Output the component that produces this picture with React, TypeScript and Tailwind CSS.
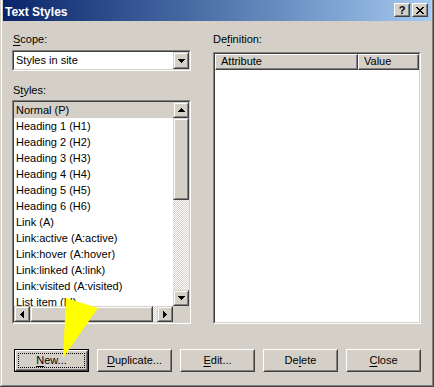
import React from "react";

type Dir = "up" | "down" | "left" | "right";

function Tri({ dir }: { dir: Dir }) {
  const rows = [
    [3, 1],
    [2, 3],
    [1, 5],
    [0, 7],
  ];
  if (dir === "up" || dir === "down") {
    const r = dir === "up" ? rows : [...rows].reverse();
    return (
      <svg width="7" height="4" viewBox="0 0 7 4" shapeRendering="crispEdges">
        {r.map(([x, w], i) => (
          <rect key={i} x={x} y={i} width={w} height={1} fill="#000" />
        ))}
      </svg>
    );
  }
  const r = dir === "left" ? rows : [...rows].reverse();
  return (
    <svg width="4" height="7" viewBox="0 0 4 7" shapeRendering="crispEdges">
      {r.map(([y, h], i) => (
        <rect key={i} x={i} y={y} width={1} height={h} fill="#000" />
      ))}
    </svg>
  );
}

function ScrollBtn({ dir, className = "" }: { dir?: Dir; className?: string }) {
  return (
    <div
      className={
        "border border-t-[#d4d0c8] border-l-[#d4d0c8] border-r-[#404040] border-b-[#404040] bg-[#d4d0c8] " +
        className
      }
    >
      <div className="w-full h-full border border-t-white border-l-white border-r-[#808080] border-b-[#808080] flex items-center justify-center">
        {dir ? <Tri dir={dir} /> : null}
      </div>
    </div>
  );
}

function Sunken({ className = "", children }: { className?: string; children?: React.ReactNode }) {
  return (
    <div className={"border border-t-[#808080] border-l-[#808080] border-r-white border-b-white " + className}>
      <div className="w-full h-full border border-t-[#404040] border-l-[#404040] border-r-[#d4d0c8] border-b-[#d4d0c8] bg-white overflow-hidden">
        {children}
      </div>
    </div>
  );
}

function PushButton({ children, isDefault = false }: { children: React.ReactNode; isDefault?: boolean }) {
  const inner = (
    <div className="w-full h-full border border-t-white border-l-white border-r-[#404040] border-b-[#404040]">
      <div className="w-full h-full border border-t-[#d4d0c8] border-l-[#d4d0c8] border-r-[#808080] border-b-[#808080] flex items-center justify-center">
        {isDefault ? (
          <div className="w-[67px] h-[15px] border border-dotted border-black flex items-center justify-center leading-[13px]">
            {children}
          </div>
        ) : (
          <span className="leading-[13px]">{children}</span>
        )}
      </div>
    </div>
  );
  if (isDefault) {
    return <div className="w-[75px] h-[23px] border border-black bg-[#d4d0c8]">{inner}</div>;
  }
  return <div className="w-[75px] h-[23px] bg-[#d4d0c8]">{inner}</div>;
}

const items = [
  "Normal (P)",
  "Heading 1 (H1)",
  "Heading 2 (H2)",
  "Heading 3 (H3)",
  "Heading 4 (H4)",
  "Heading 5 (H5)",
  "Heading 6 (H6)",
  "Link (A)",
  "Link:active (A:active)",
  "Link:hover (A:hover)",
  "Link:linked (A:link)",
  "Link:visited (A:visited)",
  "List item (LI)",
];

const checker =
  "bg-[image:repeating-conic-gradient(#ffffff_0_25%,#d4d0c8_0_50%)] bg-[length:2px_2px]";

export default function App() {
  return (
    <div className="relative w-[434px] h-[387px] overflow-hidden bg-[#d4d0c8] font-['Liberation_Sans',Arial,sans-serif] text-[11px] text-black">
      <div className="w-full h-full pl-[1px] border-r border-b border-r-[#404040] border-b-[#404040]">
        <div className="w-full h-full pl-[1px] pr-[1px] pb-[1px] border-l border-r border-b border-l-white border-r-[#808080] border-b-[#808080] flex flex-col">
          {/* Title bar */}
          <div className="h-[21px] flex items-start bg-linear-to-r from-[#0a246a] to-[#a6caf0] pr-[3px]">
            <div className="ml-[2px] mt-[5px] leading-[14px] text-[12px] font-bold text-white whitespace-nowrap">
              Text Styles
            </div>
            <div className="ml-auto mt-[3px] flex gap-[2px]">
              <div className="w-[16px] h-[14px] bg-[#d4d0c8] border border-t-white border-l-white border-r-[#404040] border-b-[#404040]">
                <div className="w-full h-full border border-t-[#d4d0c8] border-l-[#d4d0c8] border-r-[#808080] border-b-[#808080] flex items-center justify-center text-[11px] font-bold leading-[10px]">
                  ?
                </div>
              </div>
              <div className="w-[16px] h-[14px] bg-[#d4d0c8] border border-t-white border-l-white border-r-[#404040] border-b-[#404040]">
                <div className="w-full h-full border border-t-[#d4d0c8] border-l-[#d4d0c8] border-r-[#808080] border-b-[#808080] flex items-center justify-center">
                  <svg width="8" height="7" viewBox="0 0 8 7" shapeRendering="crispEdges">
                    {[0, 1, 2, 3, 4, 5, 6].map((i) => (
                      <React.Fragment key={i}>
                        <rect x={i} y={i} width={2} height={1} fill="#000" />
                        <rect x={6 - i} y={i} width={2} height={1} fill="#000" />
                      </React.Fragment>
                    ))}
                  </svg>
                </div>
              </div>
            </div>
          </div>

          {/* Body */}
          <div className="flex pl-[9px] pr-[10px] gap-[22px]">
            {/* Left column */}
            <div className="w-[179px] flex flex-col">
              <div className="mt-[12px] h-[13px] leading-[13px] pl-[1px]">
                <span className="underline underline-offset-2">S</span>cope:
              </div>
              <Sunken className="mt-[4px] h-[21px] w-[179px]">
                <div className="flex h-full">
                  <div className="flex-1 pl-[2px] leading-[17px]">Styles in site</div>
                  <ScrollBtn dir="down" className="w-[16px] h-[17px]" />
                </div>
              </Sunken>
              <div className="mt-[13px] h-[13px] leading-[13px] pl-[1px]">
                S<span className="underline underline-offset-2">t</span>yles:
              </div>
              <Sunken className="mt-[3px] h-[224px] w-[179px]">
                <div className="flex flex-col h-full">
                  <div className="flex h-[204px]">
                    <div className="w-[159px] h-[204px] overflow-hidden">
                      {items.map((t, i) => (
                        <div
                          key={t}
                          className={
                            "h-[16px] leading-[16px] pl-[2px] whitespace-nowrap " +
                            (i === 0 ? "bg-[#d4d0c8]" : "")
                          }
                        >
                          {t}
                        </div>
                      ))}
                    </div>
                    <div className="w-[16px] flex flex-col">
                      <ScrollBtn dir="up" className="w-[16px] h-[16px]" />
                      <ScrollBtn className="w-[16px] h-[82px]" />
                      <div className={"w-[16px] h-[90px] " + checker} />
                      <ScrollBtn dir="down" className="w-[16px] h-[16px]" />
                    </div>
                  </div>
                  <div className="flex h-[16px]">
                    <ScrollBtn dir="left" className="w-[16px] h-[16px]" />
                    <ScrollBtn className="w-[123px] h-[16px]" />
                    <div className={"w-[4px] h-[16px] " + checker} />
                    <ScrollBtn dir="right" className="w-[16px] h-[16px]" />
                    <div className="w-[16px] h-[16px] bg-[#d4d0c8]" />
                  </div>
                </div>
              </Sunken>
            </div>

            {/* Right column */}
            <div className="w-[208px] flex flex-col">
              <div className="mt-[12px] h-[13px] leading-[13px]">
                De<span className="underline underline-offset-2">f</span>inition:
              </div>
              <Sunken className="mt-[6px] h-[272px] w-[208px]">
                <div className="flex h-[16px]">
                  <div className="w-[143px] h-full bg-[#d4d0c8] border border-t-white border-l-white border-r-[#404040] border-b-[#404040]">
                    <div className="w-full h-full border-r border-b border-r-[#808080] border-b-[#808080] pl-[5px] leading-[13px]">
                      Attribute
                    </div>
                  </div>
                  <div className="w-[61px] h-full bg-[#d4d0c8] border border-t-white border-l-white border-r-[#404040] border-b-[#404040]">
                    <div className="w-full h-full border-r border-b border-r-[#808080] border-b-[#808080] pl-[5px] leading-[13px]">
                      Value
                    </div>
                  </div>
                </div>
              </Sunken>
            </div>
          </div>

          {/* Buttons */}
          <div className="flex pl-[11px] mt-[25px] gap-[8px]">
            <PushButton isDefault>
              <span>
                <span className="underline underline-offset-2">N</span>ew...
              </span>
            </PushButton>
            <PushButton>
              <span>
                <span className="underline underline-offset-2">D</span>uplicate...
              </span>
            </PushButton>
            <PushButton>
              <span>
                <span className="underline underline-offset-2">E</span>dit...
              </span>
            </PushButton>
            <PushButton>
              <span>
                De<span className="underline underline-offset-2">l</span>ete
              </span>
            </PushButton>
            <PushButton>
              <span>
                <span className="underline underline-offset-2">C</span>lose
              </span>
            </PushButton>
          </div>
        </div>
      </div>

      {/* Yellow pointer */}
      <svg className="absolute left-0 top-0 pointer-events-none" width="434" height="387">
        <polygon points="66,298 98,308 63,358" fill="#ffff00" />
      </svg>
    </div>
  );
}
